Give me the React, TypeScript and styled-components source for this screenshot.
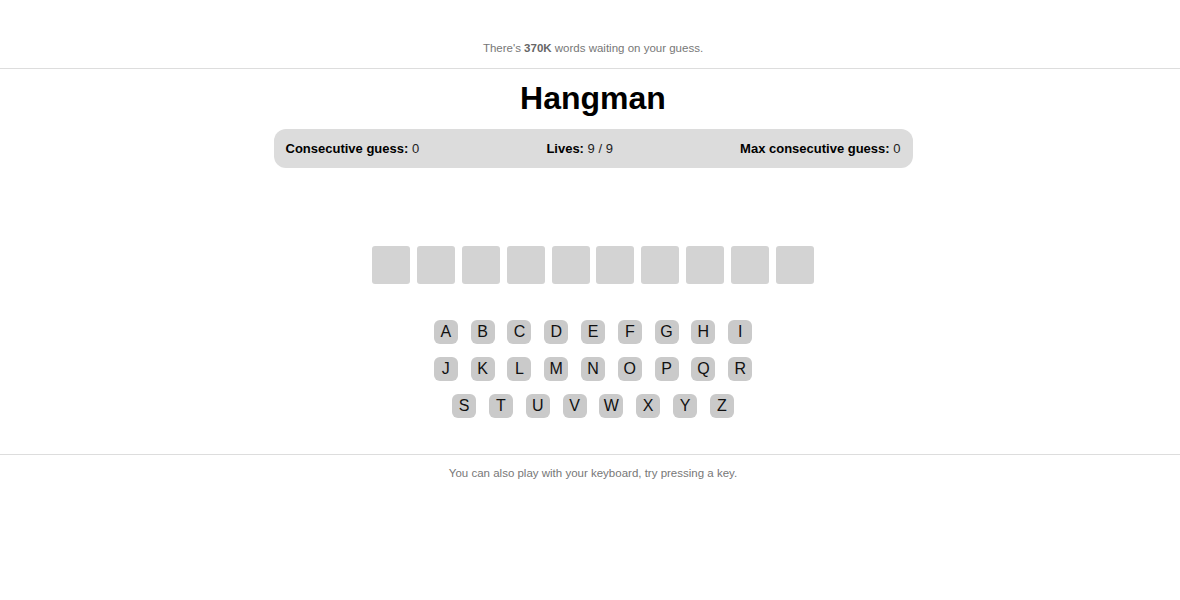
import styled, { createGlobalStyle } from 'styled-components';

const ROWS = ['ABCDEFGHI', 'JKLMNOPQR', 'STUVWXYZ'];
const WORD_LENGTH = 10;

const GlobalStyle = createGlobalStyle`
  html, body {
    margin: 0;
    padding: 0;
    background: #ffffff;
  }

  body {
    font-family: 'Liberation Sans', Arial, sans-serif;
    color: #000;
  }
`;

const App = () => {
  return (
    <Wrapper>
      <GlobalStyle />
      <Header>
        <Note>
          There&apos;s <b>370K</b> words waiting on your guess.
        </Note>
      </Header>

      <Main>
        <Title>Hangman</Title>

        <StatsBar>
          <Stat>
            <b>Consecutive guess:</b> 0
          </Stat>
          <Stat>
            <b>Lives:</b> 9 / 9
          </Stat>
          <Stat>
            <b>Max consecutive guess:</b> 0
          </Stat>
        </StatsBar>

        <Slots>
          {Array.from({ length: WORD_LENGTH }).map((_, i) => (
            <Slot key={i} />
          ))}
        </Slots>

        <Keyboard>
          {ROWS.map((row) => (
            <KeyRow key={row}>
              {row.split('').map((letter) => (
                <Key key={letter} type='button'>
                  {letter}
                </Key>
              ))}
            </KeyRow>
          ))}
        </Keyboard>
      </Main>

      <Footer>
        <Note>You can also play with your keyboard, try pressing a key.</Note>
      </Footer>
    </Wrapper>
  );
};

const Wrapper = styled.div`
  width: 100%;
  min-height: 600px;
`;

const Header = styled.header`
  height: 69px;
  box-sizing: border-box;
  display: flex;
  align-items: flex-end;
  justify-content: center;
  padding: 0 0 12px 6px;
  border-bottom: 1px solid #dddddd;
`;

const Note = styled.p`
  margin: 0;
  font-size: 11.5px;
  line-height: 16px;
  color: #777777;

  b {
    color: #666666;
  }
`;

const Main = styled.main`
  display: flex;
  flex-direction: column;
  align-items: center;
  padding: 9px 0 0 6px;
`;

const Title = styled.h1`
  margin: 0;
  font-size: 32px;
  line-height: 40px;
  font-weight: 700;
`;

const StatsBar = styled.div`
  width: 639px;
  height: 39px;
  box-sizing: border-box;
  margin-top: 11px;
  padding: 0 12px;
  display: flex;
  align-items: center;
  justify-content: space-between;
  background: #dcdcdc;
  border-radius: 12px;
`;

const Stat = styled.span`
  font-size: 13px;
  color: #222;

  b {
    color: #000;
  }
`;

const Slots = styled.div`
  display: flex;
  gap: 6.8px;
  margin-top: 78px;
`;

const Slot = styled.div`
  width: 38px;
  height: 38px;
  background: #d3d3d3;
  border-radius: 3px;
`;

const Keyboard = styled.div`
  display: flex;
  flex-direction: column;
  align-items: center;
  gap: 13px;
  margin-top: 36px;
`;

const KeyRow = styled.div`
  display: flex;
  gap: 12.8px;
`;

const Key = styled.button`
  width: 24px;
  height: 24px;
  padding: 0;
  border: none;
  border-radius: 6px;
  background: #cacaca;
  font-family: 'Liberation Sans', Arial, sans-serif;
  font-size: 16px;
  line-height: 24px;
  color: #111;
  cursor: pointer;
`;

const Footer = styled.footer`
  margin-top: 36px;
  padding: 10px 0 0 6px;
  display: flex;
  justify-content: center;
  border-top: 1px solid #dddddd;
`;

export default App;
